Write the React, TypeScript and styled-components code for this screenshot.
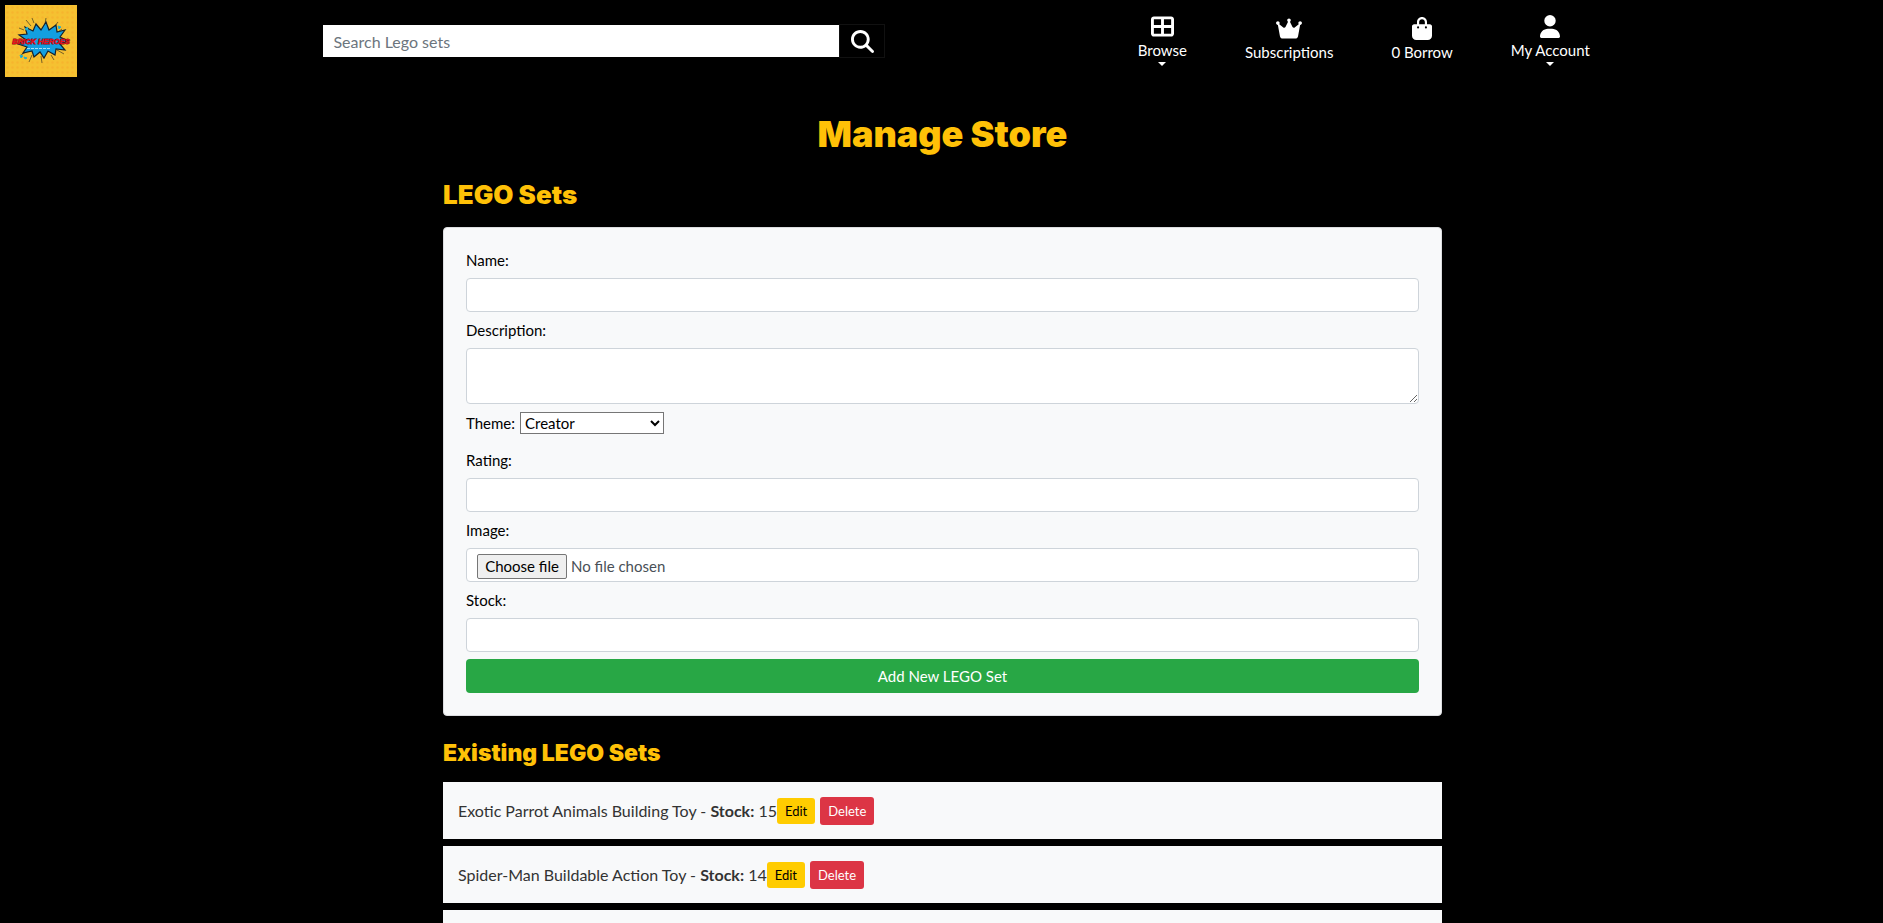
import React from "react";
import styled, { createGlobalStyle } from "styled-components";
import {
  FaBagShopping,
  FaCrown,
  FaMagnifyingGlass,
  FaTableCellsLarge,
  FaUser,
} from "react-icons/fa6";

const GlobalStyle = createGlobalStyle`
  *, *::before, *::after { box-sizing: border-box; }
  body {
    margin: 0;
    background: #000;
    color: #000;
    font-family: Lato, "Liberation Sans", sans-serif;
    font-size: 15px;
    line-height: 24px;
  }
  button, input, select, textarea { font: inherit; }
`;

const Header = styled.header`
  display: flex;
  align-items: center;
  gap: 3px;
  padding: 5px;
`;

const LogoLink = styled.a`
  flex: none;
  display: block;
  width: 72px;
  height: 72px;
`;

const HeaderBody = styled.div`
  flex: 1;
  display: flex;
  align-items: center;
  justify-content: space-between;
  padding: 0 14% 0 13%;
`;

const SearchForm = styled.form`
  flex: 0 1 562px;
  display: flex;
  align-items: center;
`;

const SearchInput = styled.input`
  flex: 1;
  min-width: 0;
  height: 32px;
  padding: 0 10px;
  border: 0;
  background: #fff;
  font-size: 16px;
  &::placeholder { color: #6c757d; opacity: 1; }
`;

const SearchButton = styled.button`
  display: flex;
  align-items: center;
  justify-content: center;
  width: 46px;
  height: 34px;
  padding: 0;
  border: 1px solid #111;
  background: #000;
  color: #fff;
  svg { width: 23px; height: 23px; }
`;

const Nav = styled.nav`
  display: flex;
  align-items: center;
  gap: 58px;
  padding: 0 26px 2px 0;
`;

const NavLink = styled.a`
  display: flex;
  flex-direction: column;
  align-items: center;
  color: #fff;
  text-decoration: none;
  white-space: nowrap;
  svg { height: 23px; }
`;

const Caret = styled.span`
  border: 4px solid transparent;
  border-top-color: #fff;
  border-bottom: 0;
`;

const Main = styled.main`
  max-width: 1027px;
  margin: 0 auto;
  padding: 28px 13px 0 15px;
`;

const Heading = styled.h1`
  margin: 0;
  color: #ffc107;
  font-family: Inter, sans-serif;
  font-weight: 900;
  font-size: 36px;
  line-height: 48px;
  text-align: center;
`;

const SectionHeading = styled(Heading).attrs({ as: "h2" })`
  margin: 18px 0 13px;
  font-size: 26px;
  line-height: 38px;
  text-align: left;
`;

const ListHeading = styled(Heading).attrs({ as: "h3" })`
  margin: 20px 0 12px;
  font-size: 23px;
  line-height: 34px;
  text-align: left;
`;

const FormCard = styled.form`
  display: flex;
  flex-direction: column;
  gap: 6px;
  padding: 20px 22px 22px;
  border: 1px solid #dcdde0;
  border-radius: 4px;
  background: #f8f9fa;
`;

const Label = styled.label``;

const TextField = styled.input`
  width: 100%;
  height: 34px;
  padding: 0 11px;
  border: 1px solid #ced4da;
  border-radius: 4px;
  background: #fff;
`;

const TextArea = styled.textarea`
  display: block;
  width: 100%;
  height: 56px;
  padding: 6px 11px;
  border: 1px solid #ced4da;
  border-radius: 4px;
  background: #fff;
`;

const ThemeRow = styled.div`
  display: flex;
  align-items: center;
  gap: 5px;
  padding: 1px 0 7px;
`;

const ThemeSelect = styled.select`
  width: 144px;
  height: 22px;
  padding: 0;
  border: 1px solid #767676;
  border-radius: 0;
  background: #fff;
  color: #000;
`;

const FileField = styled.div`
  position: relative;
  display: flex;
  align-items: center;
  gap: 4px;
  height: 34px;
  padding: 2px 10px 0;
  border: 1px solid #ced4da;
  border-radius: 4px;
  background: #fff;
  color: #495057;
`;

const FileInput = styled.input`
  position: absolute;
  inset: 0;
  width: 100%;
  opacity: 0;
`;

const FileButton = styled.span`
  width: 90px;
  height: 25px;
  border: 1px solid #767676;
  border-radius: 2px;
  background: #efefef;
  color: #000;
  line-height: 23px;
  text-align: center;
`;

const SubmitButton = styled.button`
  height: 34px;
  margin-top: 1px;
  padding: 0;
  border: 0;
  border-radius: 4px;
  background: #28a745;
  color: #fff;
`;

const SetList = styled.ul`
  display: flex;
  flex-direction: column;
  gap: 7px;
  margin: 0;
  padding: 0;
  list-style: none;
`;

const SetItem = styled.li`
  display: flex;
  align-items: center;
  min-height: 57px;
  padding: 14px 15px;
  background: #f8f9fa;
  color: #333;
  font-size: 16px;
`;

const ItemButton = styled.button<{ $danger?: boolean }>`
  height: ${(p) => (p.$danger ? 28 : 26)}px;
  margin-left: ${(p) => (p.$danger ? 5 : 0)}px;
  padding: 0 8px;
  border: 0;
  border-radius: 3px;
  background: ${(p) => (p.$danger ? "#dc3545" : "#ffcc00")};
  color: ${(p) => (p.$danger ? "#fff" : "#000")};
  font-size: 13px;
`;

const navItems = [
  { label: "Browse", Icon: FaTableCellsLarge, iconWidth: 23, menu: true },
  { label: "Subscriptions", Icon: FaCrown, iconWidth: 26, menu: false },
  { label: "0 Borrow", Icon: FaBagShopping, iconWidth: 20, menu: false },
  { label: "My Account", Icon: FaUser, iconWidth: 20, menu: true },
];

const legoSets = [
  { name: "Exotic Parrot Animals Building Toy", stock: 15 },
  { name: "Spider-Man Buildable Action Toy", stock: 14 },
];

function Logo() {
  return (
    <svg viewBox="0 0 72 72" width="72" height="72" role="img" aria-label="Brick Heroes">
      <defs>
        <pattern id="dots" width="5" height="5" patternUnits="userSpaceOnUse">
          <circle cx="2.5" cy="2.5" r="1.3" fill="#f6b52d" />
        </pattern>
      </defs>
      <rect width="72" height="72" fill="#f5c131" />
      <rect width="72" height="72" fill="url(#dots)" />
      <path
        d="M21 15l5 6M27 13l2 5M41 13l-1 6M53 17l-4 5M14 23l5 2M57 24l-4 3M16 50l6-4M24 57l3-7M37 58l-1-7M49 55l-3-5M59 49l-7-4"
        stroke="#756325"
        strokeWidth="1"
      />
      <path
        d="M20 22l8 4 3-7 5 6 5-8 3 8 7-5 1 7 8-2-5 7 8 4-8 3 5 6-9-1-1 6-7-4-4 7-4-6-6 5-2-6-9 2 4-6-9-3 8-4-7-5 8-1z"
        fill="#139fe0"
        stroke="#16222c"
        strokeWidth="1.2"
      />
      <path d="M20 24l3-2-1 3zM53 21l3 1-2 2zM15 50l3 1-2 2zM19 52l3 1-2 1z" fill="#139fe0" stroke="#2bb0c5" />
      <text
        x="36"
        y="39"
        textAnchor="middle"
        fontFamily="Liberation Sans, sans-serif"
        fontSize="7.5"
        fontWeight="700"
        fontStyle="italic"
        fill="#f0101c"
        stroke="#7a0b18"
        strokeWidth="0.8"
        paintOrder="stroke"
      >
        BRICK HEROES
      </text>
      <path d="M22 43.500h24" stroke="#a8dcf4" strokeWidth="1" strokeDasharray="3 1" />
    </svg>
  );
}

export default function App() {
  return (
    <>
      <GlobalStyle />
      <Header>
        <LogoLink href="#home">
          <Logo />
        </LogoLink>
        <HeaderBody>
          <SearchForm role="search">
            <SearchInput type="search" placeholder="Search Lego sets" aria-label="Search Lego sets" />
            <SearchButton type="submit" aria-label="Search">
              <FaMagnifyingGlass />
            </SearchButton>
          </SearchForm>
          <Nav>
            {navItems.map(({ label, Icon, iconWidth, menu }) => (
              <NavLink key={label} href="#">
                <Icon size={iconWidth} />
                <span>{label}</span>
                {menu && <Caret />}
              </NavLink>
            ))}
          </Nav>
        </HeaderBody>
      </Header>
      <Main>
        <Heading>Manage Store</Heading>
        <SectionHeading>LEGO Sets</SectionHeading>
        <FormCard>
          <Label htmlFor="name">Name:</Label>
          <TextField id="name" type="text" />
          <Label htmlFor="description">Description:</Label>
          <TextArea id="description" />
          <ThemeRow>
            <Label htmlFor="theme">Theme:</Label>
            <ThemeSelect id="theme">
              <option>Creator</option>
            </ThemeSelect>
          </ThemeRow>
          <Label htmlFor="rating">Rating:</Label>
          <TextField id="rating" type="text" />
          <Label htmlFor="image">Image:</Label>
          <FileField>
            <FileButton>Choose file</FileButton>
            <span>No file chosen</span>
            <FileInput id="image" type="file" />
          </FileField>
          <Label htmlFor="stock">Stock:</Label>
          <TextField id="stock" type="text" />
          <SubmitButton type="submit">Add New LEGO Set</SubmitButton>
        </FormCard>
        <ListHeading>Existing LEGO Sets</ListHeading>
        <SetList>
          {legoSets.map(({ name, stock }) => (
            <SetItem key={name}>
              <span>
                {name} - <strong>Stock:</strong> {stock}
              </span>
              <ItemButton type="button">Edit</ItemButton>
              <ItemButton type="button" $danger>
                Delete
              </ItemButton>
            </SetItem>
          ))}
          <SetItem />
        </SetList>
      </Main>
    </>
  );
}
